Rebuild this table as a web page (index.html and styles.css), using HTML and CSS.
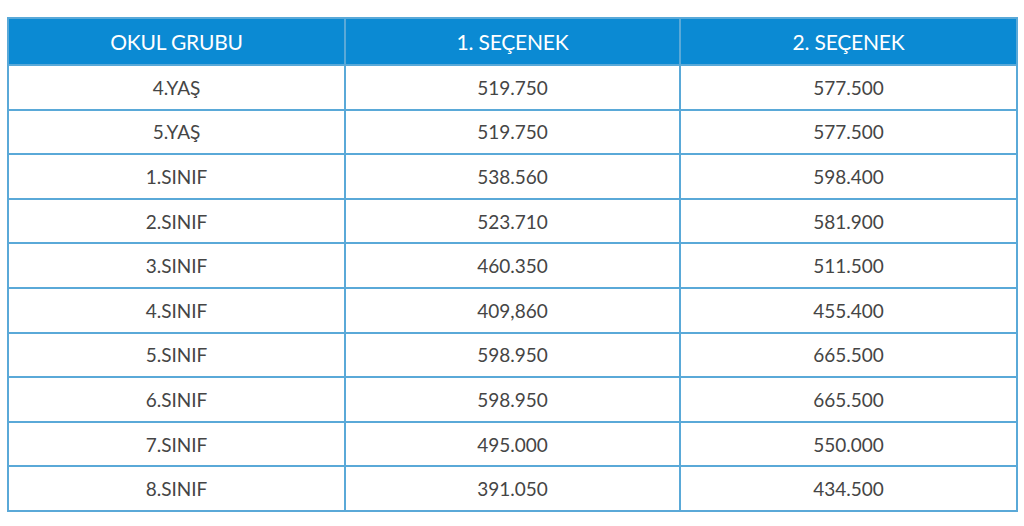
FILE: index.html
```html
<!DOCTYPE html>
<html lang="tr">
<head>
<meta charset="utf-8">
<link rel="stylesheet" href="styles.css">
</head>
<body>
<div class="wrap">
<table class="price">
  <colgroup><col class="c1"><col class="c2"><col class="c3"></colgroup>
  <thead>
    <tr><th>OKUL GRUBU</th><th>1. SEÇENEK</th><th>2. SEÇENEK</th></tr>
  </thead>
  <tbody>
    <tr><td>4.YAŞ</td><td>519.750</td><td>577.500</td></tr>
    <tr><td>5.YAŞ</td><td>519.750</td><td>577.500</td></tr>
    <tr><td>1.SINIF</td><td>538.560</td><td>598.400</td></tr>
    <tr><td>2.SINIF</td><td>523.710</td><td>581.900</td></tr>
    <tr><td>3.SINIF</td><td>460.350</td><td>511.500</td></tr>
    <tr><td>4.SINIF</td><td>409,860</td><td>455.400</td></tr>
    <tr><td>5.SINIF</td><td>598.950</td><td>665.500</td></tr>
    <tr><td>6.SINIF</td><td>598.950</td><td>665.500</td></tr>
    <tr><td>7.SINIF</td><td>495.000</td><td>550.000</td></tr>
    <tr><td>8.SINIF</td><td>391.050</td><td>434.500</td></tr>
  </tbody>
</table>
</div>
</body>
</html>
```

FILE: styles.css
```css
html, body {
  margin: 0;
  padding: 0;
  background: #ffffff;
}
.wrap {
  padding: 17px 8px 0 7px;
}
.price {
  width: 1009px;
  border-collapse: collapse;
  table-layout: fixed;
  font-family: Lato, "Open Sans", "Liberation Sans", sans-serif;
}
.c1 { width: 337px; }
.c2 { width: 335px; }
.c3 { width: 337px; }
.price th {
  height: 45px;
  padding: 0;
  background: #0b8ad3;
  color: #ffffff;
  font-size: 21px;
  font-weight: 400;
  letter-spacing: -0.2px;
  text-align: center;
  vertical-align: middle;
  border: 2px solid #5aa9d8;
}
.price th + th {
  border-left: 2px solid #1f6ea6;
}
.price td {
  height: 42.6px;
  padding: 0;
  color: #454545;
  font-size: 19px;
  text-align: center;
  vertical-align: middle;
  border: 2px solid #5aa9d8;
}
```
